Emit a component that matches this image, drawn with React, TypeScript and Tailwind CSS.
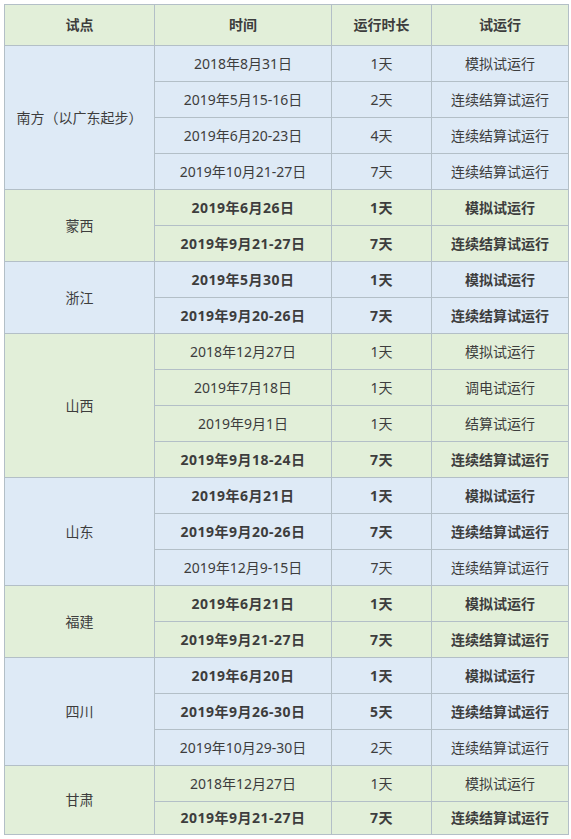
import React from "react";

type Row = { date: string; dur: string; kind: string; bold: boolean };
type Group = { name: string; color: "blue" | "green"; rows: Row[] };

const r = (date: string, dur: string, kind: string, bold = false): Row => ({ date, dur, kind, bold });

const groups: Group[] = [
  {
    name: "南方（以广东起步）",
    color: "blue",
    rows: [
      r("2018年8月31日", "1天", "模拟试运行"),
      r("2019年5月15-16日", "2天", "连续结算试运行"),
      r("2019年6月20-23日", "4天", "连续结算试运行"),
      r("2019年10月21-27日", "7天", "连续结算试运行"),
    ],
  },
  {
    name: "蒙西",
    color: "green",
    rows: [r("2019年6月26日", "1天", "模拟试运行", true), r("2019年9月21-27日", "7天", "连续结算试运行", true)],
  },
  {
    name: "浙江",
    color: "blue",
    rows: [r("2019年5月30日", "1天", "模拟试运行", true), r("2019年9月20-26日", "7天", "连续结算试运行", true)],
  },
  {
    name: "山西",
    color: "green",
    rows: [
      r("2018年12月27日", "1天", "模拟试运行"),
      r("2019年7月18日", "1天", "调电试运行"),
      r("2019年9月1日", "1天", "结算试运行"),
      r("2019年9月18-24日", "7天", "连续结算试运行", true),
    ],
  },
  {
    name: "山东",
    color: "blue",
    rows: [
      r("2019年6月21日", "1天", "模拟试运行", true),
      r("2019年9月20-26日", "7天", "连续结算试运行", true),
      r("2019年12月9-15日", "7天", "连续结算试运行"),
    ],
  },
  {
    name: "福建",
    color: "green",
    rows: [r("2019年6月21日", "1天", "模拟试运行", true), r("2019年9月21-27日", "7天", "连续结算试运行", true)],
  },
  {
    name: "四川",
    color: "blue",
    rows: [
      r("2019年6月20日", "1天", "模拟试运行", true),
      r("2019年9月26-30日", "5天", "连续结算试运行", true),
      r("2019年10月29-30日", "2天", "连续结算试运行"),
    ],
  },
  {
    name: "甘肃",
    color: "green",
    rows: [r("2018年12月27日", "1天", "模拟试运行"), r("2019年9月21-27日", "7天", "连续结算试运行", true)],
  },
];

const cell = "border border-[#b3bfc7] text-center align-middle p-0 pb-[1px]";

export default function App() {
  return (
    <div
      className="bg-white w-[571px] h-[839px] pt-[4px] pl-[4px] text-[14px] text-[#3d3d3d]"
      style={{ fontFamily: '"Noto Sans", "Noto Sans CJK SC", sans-serif' }}
    >
      <table className="border-collapse table-fixed w-[564px]">
        <colgroup>
          <col className="w-[150px]" />
          <col className="w-[177px]" />
          <col className="w-[100px]" />
          <col className="w-[137px]" />
        </colgroup>
        <thead>
          <tr className="h-[41px] bg-[#e2efd9] font-bold">
            <th className={cell}>试点</th>
            <th className={cell}>时间</th>
            <th className={cell}>运行时长</th>
            <th className={cell}>试运行</th>
          </tr>
        </thead>
        <tbody>
          {groups.map((g, gi) =>
            g.rows.map((row, ri) => {
              const last = gi === groups.length - 1 && ri === g.rows.length - 1;
              const w = row.bold ? "font-bold tracking-[0.5px]" : "font-normal";
              const wk = row.bold ? "font-bold" : "font-normal";
              return (
                <tr
                  key={`${gi}-${ri}`}
                  className={`${last ? "h-[33px]" : "h-[36px]"} ${g.color === "blue" ? "bg-[#deeaf6]" : "bg-[#e2efd9]"}`}
                >
                  {ri === 0 && (
                    <td className={cell} rowSpan={g.rows.length}>
                      {g.name}
                    </td>
                  )}
                  <td className={`${cell} ${w}`}>{row.date}</td>
                  <td className={`${cell} ${w}`}>{row.dur}</td>
                  <td className={`${cell} ${wk}`}>{row.kind}</td>
                </tr>
              );
            })
          )}
        </tbody>
      </table>
    </div>
  );
}
